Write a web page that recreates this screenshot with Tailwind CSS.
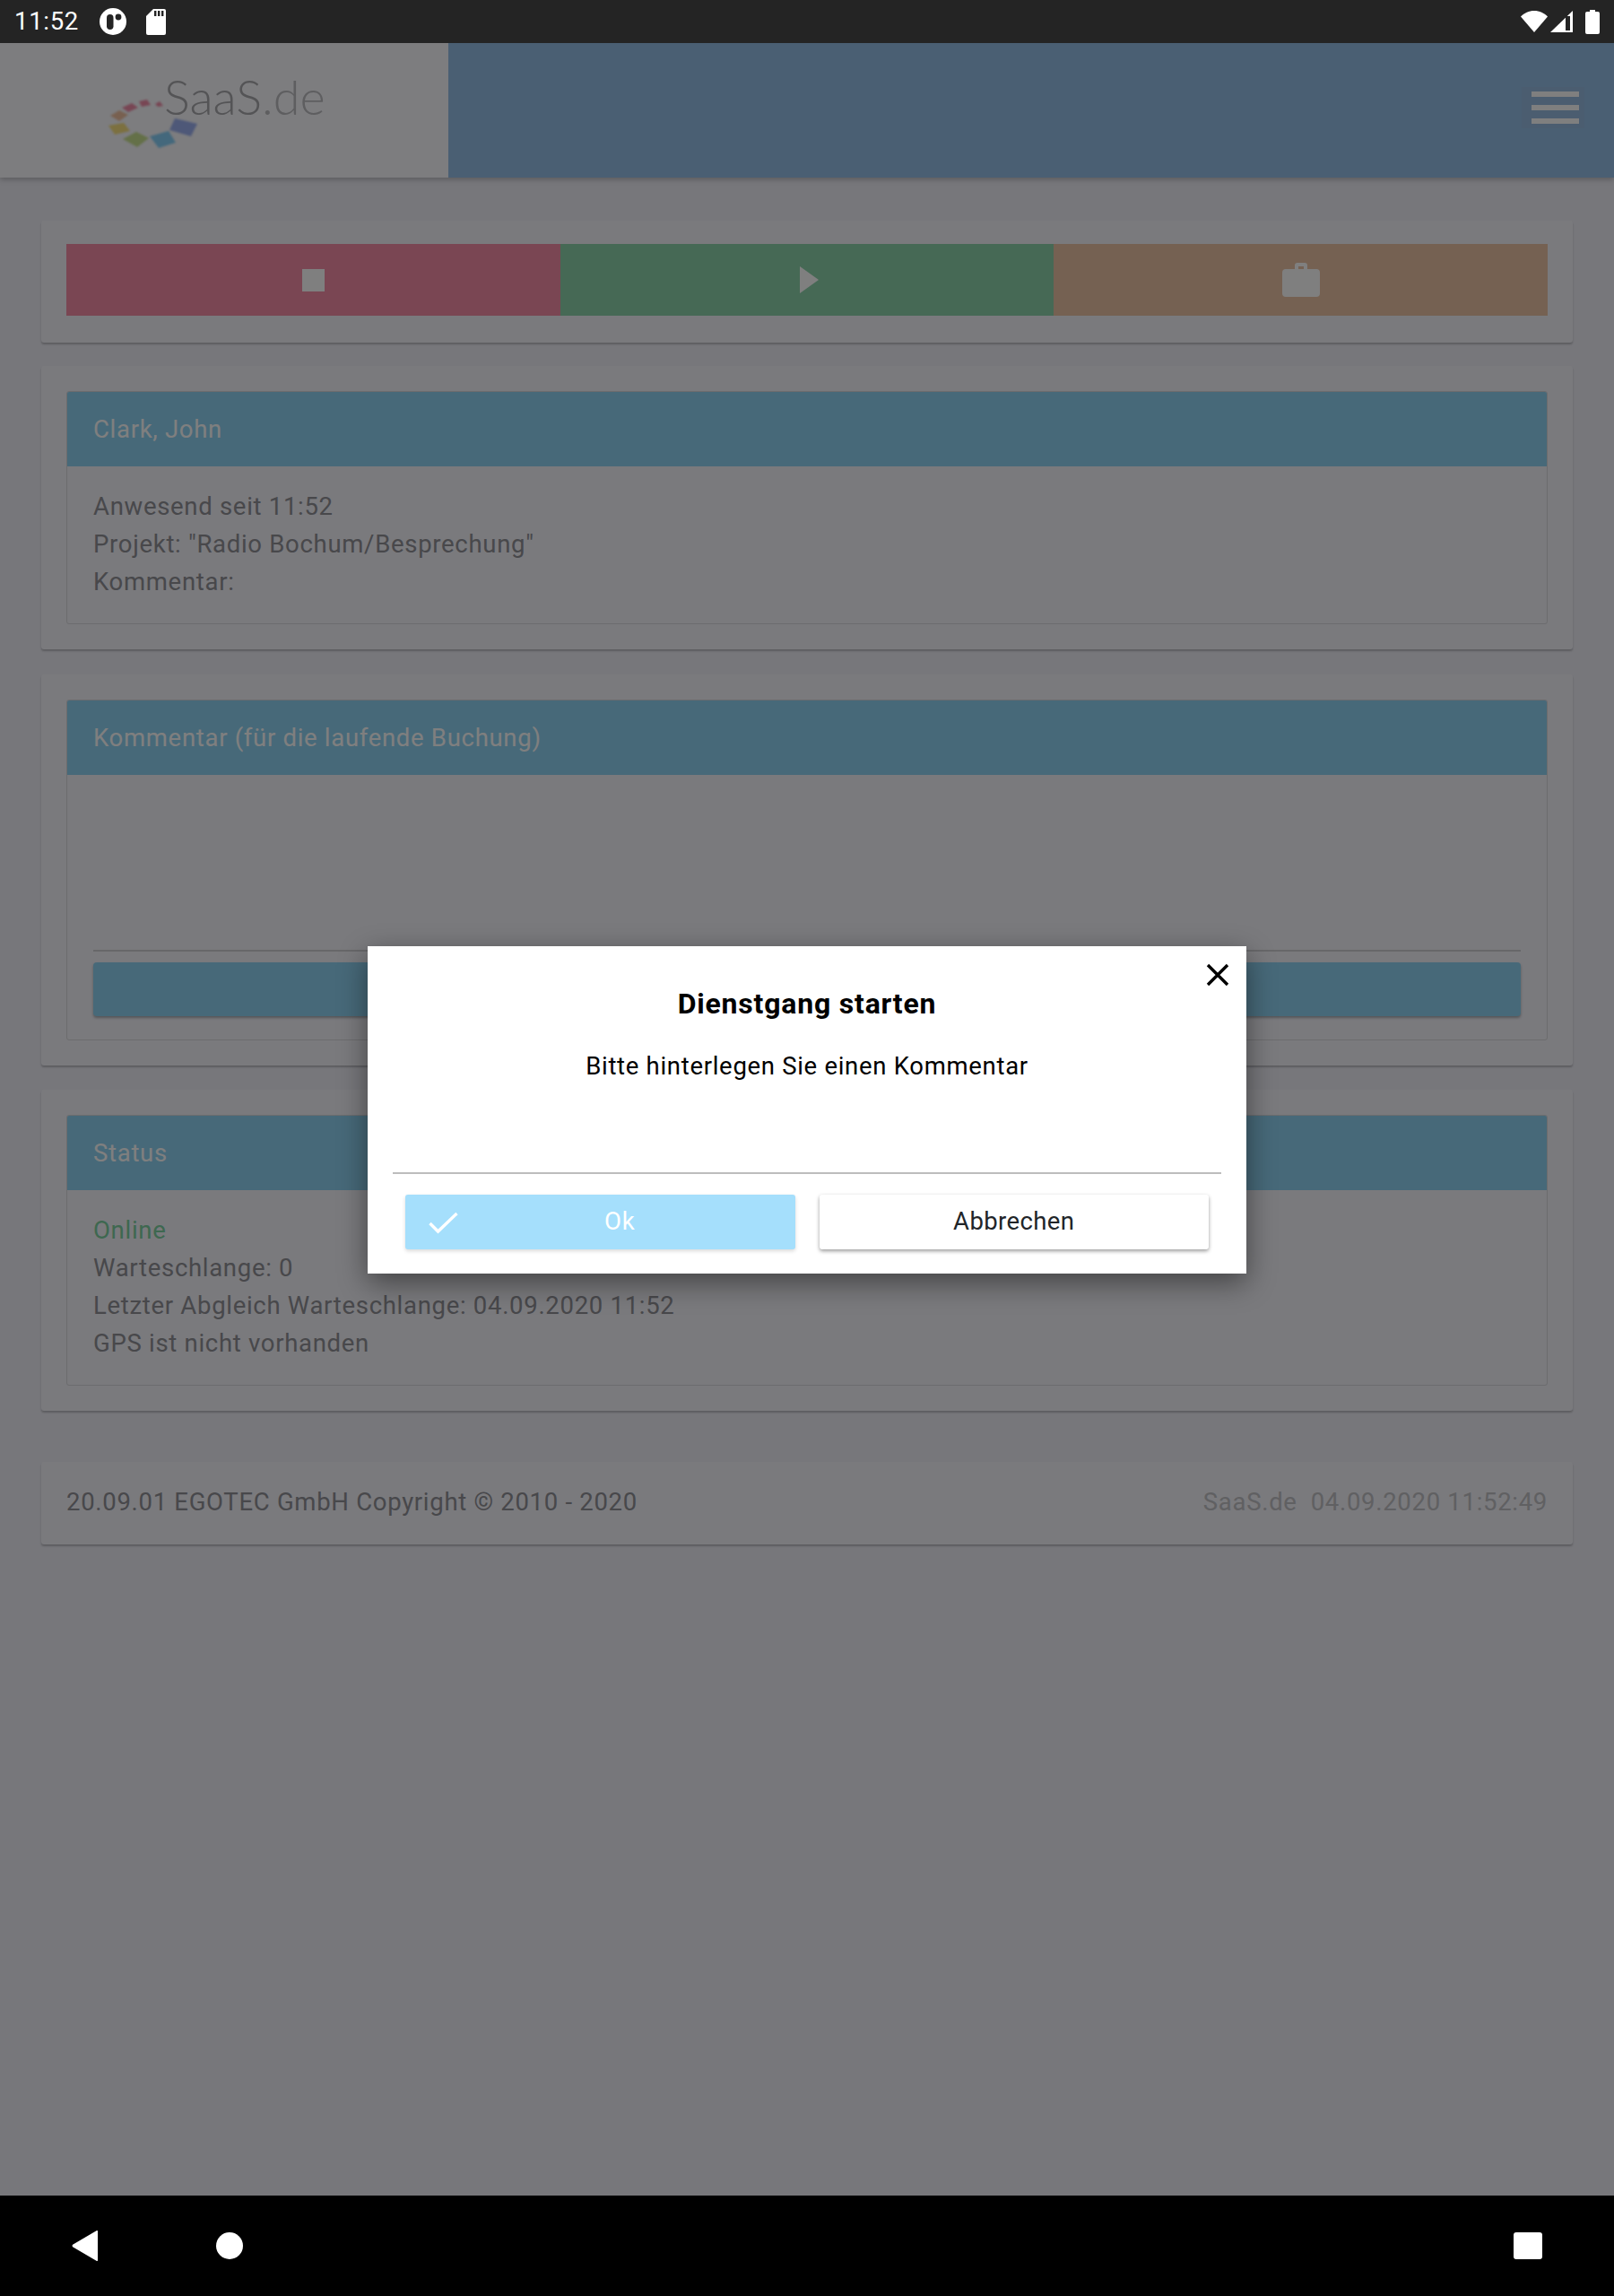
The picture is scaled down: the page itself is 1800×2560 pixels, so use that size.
<!DOCTYPE html>
<html lang="de">
  <head>
    <meta charset="UTF-8" />
    <meta name="viewport" content="width=device-width, initial-scale=1.0" />
    <title>SaaS.de</title>
    <script src="https://cdn.jsdelivr.net/npm/@tailwindcss/browser@4"></script>
  </head>
  <body class="bg-black font-['Roboto',sans-serif] text-[27.5px] leading-[42px] tracking-[0.7px] text-[#212529]">
    <div class="flex h-[2560px] w-[1800px] flex-col overflow-hidden">
      <!-- Android status bar -->
      <div class="flex h-[48px] items-center bg-[#242424] pl-[16px] pr-[16px] text-white">
        <span class="w-[94px] text-[27.5px] leading-none">11:52</span>
        <svg width="32" height="32" viewBox="0 0 32 32" class="mr-[20px]">
          <circle cx="16" cy="16" r="15" fill="#fff" />
          <rect x="9" y="8" width="7.5" height="17" rx="3.7" fill="#242424" />
          <circle cx="22" cy="11" r="3.4" fill="#242424" />
        </svg>
        <svg width="24" height="30" viewBox="0 0 24 30">
          <path d="M9 1h12a2 2 0 0 1 2 2v25a2 2 0 0 1-2 2H3a2 2 0 0 1-2-2V9z" fill="#fff" />
          <rect x="10" y="3" width="2.4" height="6" fill="#242424" />
          <rect x="14" y="3" width="2.4" height="6" fill="#242424" />
          <rect x="18" y="3" width="2.4" height="6" fill="#242424" />
        </svg>
        <div class="ml-auto flex items-center">
          <svg width="30" height="26" viewBox="0 0 30 26" class="mr-[3px]">
            <path d="M0 7.5C4 3.500 9 1 15 1s11 2.500 15 6.500L15 25z" fill="#fff" />
          </svg>
          <svg width="26" height="26" viewBox="0 0 26 26" class="mr-[13px]">
            <path d="M25 1v24H0z" fill="#fff" />
            <path d="M17 7h5v16h-5z" fill="#242424" />
          </svg>
          <svg width="16" height="27" viewBox="0 0 16 27">
            <path d="M5 0h6v2h3a2 2 0 0 1 2 2v21a2 2 0 0 1-2 2H2a2 2 0 0 1-2-2V4a2 2 0 0 1 2-2h3z" fill="#fff" />
          </svg>
        </div>
      </div>

      <!-- App -->
      <div class="relative flex-1 overflow-hidden bg-[#eeeef6]">
        <header class="flex h-[150px] shadow-[0_2px_6px_rgba(0,0,0,0.25)]">
          <div class="relative w-[500px] bg-[#fafafe]">
            <svg width="110" height="60" viewBox="0 0 110 60" class="absolute left-[120px] top-[62px] blur-[0.8px]">
              <path d="M1 30l17-3 7 9-17 4z" fill="#f8e080" />
              <path d="M3 19l10-6 10 5-10 7z" fill="#f0c0a0" />
              <path d="M16 10l11-5 7 5-11 5z" fill="#f08ca8" />
              <path d="M35 3l9-2 4 6-10 2z" fill="#f08ca8" />
              <path d="M53 6l5-3 4 5-6 1z" fill="#f08ca8" />
              <path d="M75 22l25 6-7 14-24-7z" fill="#9cb0f0" />
              <path d="M47 42l21-6 8 13-19 6z" fill="#88d0f8" />
              <path d="M17 45l15-8 14 7-13 10z" fill="#c8e090" />
            </svg>
            <span class="absolute left-[183px] top-[30px] font-['Lato',sans-serif] text-[54px] font-light leading-[60px] tracking-normal text-[#a8a8ac]">SaaS<span class="text-[#bdbdc1]">.de</span></span>
          </div>
          <div class="relative flex-1 bg-[#94bee6]">
            <div class="absolute right-[33px] top-[49px] flex h-[46px] w-[70px] flex-col items-center justify-center gap-[9px] bg-[#96bbe0] pl-[5px]">
              <div class="h-[6px] w-[53px] bg-white"></div>
              <div class="h-[6px] w-[53px] bg-white"></div>
              <div class="h-[6px] w-[53px] bg-white"></div>
            </div>
          </div>
        </header>

        <main class="px-[46px] pt-[48px]">
          <!-- Stop / start / errand -->
          <section class="rounded-[3px] bg-[#f4f4fb] px-[28px] pb-[30px] pt-[26px] shadow-[0_2px_2px_rgba(0,0,0,0.22)]">
            <div class="grid h-[80px] grid-cols-3">
              <div class="flex items-center justify-center bg-[#f48ca6]">
                <div class="h-[25px] w-[25px] bg-white"></div>
              </div>
              <div class="flex items-center justify-center bg-[#8dd2ab]">
                <svg width="21" height="30" viewBox="0 0 21 30" class="ml-[5px]"><path d="M0 0l21 15L0 30z" fill="#fff" /></svg>
              </div>
              <div class="flex items-center justify-center bg-[#eac3a5]">
                <svg width="42" height="38" viewBox="0 0 42 38">
                  <path d="M14 7V3a3 3 0 0 1 3-3h8a3 3 0 0 1 3 3v4h10a4 4 0 0 1 4 4v23a4 4 0 0 1-4 4H4a4 4 0 0 1-4-4V11a4 4 0 0 1 4-4zM18 4v3h6V4z" fill="#fff" fill-rule="evenodd" />
                </svg>
              </div>
            </div>
          </section>

          <!-- Employee -->
          <section class="mt-[26px] rounded-[3px] bg-[#f4f4fb] p-[28px] shadow-[0_2px_2px_rgba(0,0,0,0.22)]">
            <div class="overflow-hidden rounded-[3px] border border-[#d8d8dc]">
              <div class="flex h-[83px] items-center bg-[#8fd3f3] px-[29px] text-white">Clark, John</div>
              <div class="px-[29px] pb-[25px] pt-[24px] text-[#909096]">
                <p>Anwesend seit 11:52</p>
                <p>Projekt: "Radio Bochum/Besprechung"</p>
                <p>Kommentar:</p>
              </div>
            </div>
          </section>

          <!-- Comment -->
          <section class="mt-[28px] rounded-[3px] bg-[#f4f4fb] p-[28px] shadow-[0_2px_2px_rgba(0,0,0,0.22)]">
            <div class="overflow-hidden rounded-[3px] border border-[#d8d8dc]">
              <div class="flex h-[83px] items-center bg-[#8fd3f3] px-[29px] text-white">Kommentar (für die laufende Buchung)</div>
              <div class="px-[29px] pb-[26px] pt-[195px]">
                <div class="h-[2px] bg-[#cfcfd3]"></div>
                <div class="mt-[12px] h-[60px] rounded-[4px] bg-[#8fd3f3] shadow-[0_2px_3px_rgba(0,0,0,0.3)]"></div>
              </div>
            </div>
          </section>

          <!-- Status -->
          <section class="mt-[27px] rounded-[3px] bg-[#f4f4fb] p-[28px] shadow-[0_2px_2px_rgba(0,0,0,0.22)]">
            <div class="overflow-hidden rounded-[3px] border border-[#d8d8dc]">
              <div class="flex h-[83px] items-center bg-[#8fd3f3] px-[29px] text-white">Status</div>
              <div class="px-[29px] pb-[25px] pt-[24px] text-[#909096]">
                <p class="text-[#7cd0a0]">Online</p>
                <p>Warteschlange: 0</p>
                <p>Letzter Abgleich Warteschlange: 04.09.2020 11:52</p>
                <p>GPS ist nicht vorhanden</p>
              </div>
            </div>
          </section>

          <!-- Footer -->
          <footer class="mt-[57px] flex h-[92px] items-center justify-between rounded-[3px] bg-[#f4f4fb] px-[28px] pb-[2px] shadow-[0_2px_2px_rgba(0,0,0,0.22)]">
            <span class="text-[#909096]">20.09.01 EGOTEC GmbH Copyright © 2010 - 2020</span>
            <span class="whitespace-pre text-[#c0c0c4]">SaaS.de  04.09.2020 11:52:49</span>
          </footer>
        </main>

        <!-- Modal -->
        <div class="absolute inset-0 flex justify-center bg-black/50 pt-[1007px]">
          <div class="relative h-[365px] w-[980px] bg-white px-[28px] text-black shadow-[0_10px_30px_rgba(0,0,0,0.45)]">
            <svg width="26" height="26" viewBox="0 0 26 26" class="absolute right-[19px] top-[19px]">
              <path d="M2 2l22 22M24 2L2 24" stroke="#000" stroke-width="3.4" fill="none" />
            </svg>
            <h2 class="pt-[42px] text-center text-[32px] font-bold leading-[44px] tracking-[0.8px]">Dienstgang starten</h2>
            <p class="mt-[27px] text-center leading-[42px]">Bitte hinterlegen Sie einen Kommentar</p>
            <div class="mt-[97px] h-[2px] bg-[#bdbdbd]"></div>
            <div class="mt-[23px] grid grid-cols-2 gap-[27px] px-[14px]">
              <div class="relative flex h-[61px] items-center justify-center rounded-[3px] bg-[#a5dffc] pb-[1px] pl-[44px] text-white shadow-[0_2px_4px_rgba(0,0,0,0.15)]">
                <svg width="33" height="25" viewBox="0 0 33 25" class="absolute left-[26px] top-[19px]">
                  <path d="M1.500 13l9 9L31.500 2" stroke="#fff" stroke-width="3.400" fill="none" />
                </svg>
                Ok
              </div>
              <div class="flex h-[61px] items-center justify-center rounded-[3px] bg-white pb-[1px] tracking-[0.4px] text-[#212529] shadow-[0_2px_4px_rgba(0,0,0,0.4)]">Abbrechen</div>
            </div>
          </div>
        </div>
      </div>

      <!-- Android navigation bar -->
      <div class="flex h-[112px] items-center bg-black pl-[80px] pr-[80px]">
        <svg width="30" height="34" viewBox="0 0 30 34"><path d="M29 1v32a1 1 0 0 1-1.500 .8L1.500 18.500a1.700 1.700 0 0 1 0-3L27.500 .2A1 1 0 0 1 29 1z" fill="#fff" /></svg>
        <div class="ml-[131px] h-[30px] w-[30px] rounded-full bg-white"></div>
        <div class="ml-auto h-[30px] w-[32px] rounded-[3px] bg-white"></div>
      </div>
    </div>
  </body>
</html>
